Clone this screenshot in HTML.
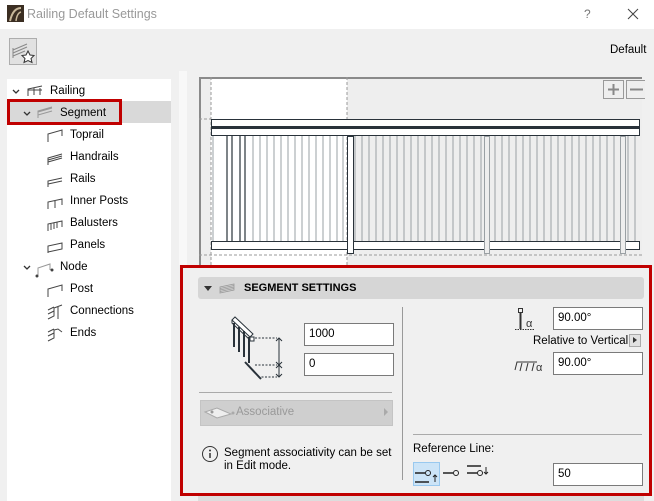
<!DOCTYPE html>
<html><head><meta charset="utf-8"><style>
*{margin:0;padding:0;box-sizing:border-box}
body{width:654px;height:501px;overflow:hidden;background:#f0f0f0;font-family:"Liberation Sans",sans-serif;font-size:11.5px;color:#000;position:relative}
.a{position:absolute}
.inp{position:absolute;background:#fff;border:1px solid #7a7a7a;height:23px;width:90px;padding:4px 0 0 4px;font-size:11.5px}
.ti{position:absolute;left:0;white-space:nowrap}
</style></head><body>
<div class="a" style="left:0;top:0;width:654px;height:29px;background:#fff"></div>
<div class="a" style="left:7px;top:5px;width:17px;height:17px;background:#3b2e22"></div>
<svg class="a" style="left:7px;top:5px" width="17" height="17"><path d="M3 16 Q6 3 14 3" stroke="#c8b89a" stroke-width="2" fill="none"/><path d="M9 16 Q10 8 14 7" stroke="#c8b89a" stroke-width="1.5" fill="none"/></svg>
<div class="a" style="left:27px;top:7px;font-size:12.5px;color:#999">Railing Default Settings</div>
<div class="a" style="left:584px;top:7px;font-size:12px;color:#777">?</div>
<svg class="a" style="left:627px;top:8px" width="12" height="12"><path d="M1 1L11 11M11 1L1 11" stroke="#444" stroke-width="1"/></svg>
<div class="a" style="left:9px;top:38px;width:28px;height:27px;border:1px solid #adadad;background:#e1e1e1"></div>
<svg class="a" style="left:11px;top:40px" width="25" height="24"><path d="M2 10L16 4M2 13L16 7M2 16L14 11M2 8v10" stroke="#888" fill="none"/><path d="M17 11l2 4 4 .5-3 3 1 4-4-2-4 2 1-4-3-3 4-.5z" fill="#fff" stroke="#333"/></svg>
<div class="a" style="left:610px;top:44px">Default</div>
<div class="a" style="left:7px;top:79px;width:164px;height:422px;background:#fff"></div>
<div class="a" style="left:7px;top:101px;width:164px;height:22px;background:#d9d9d9"></div>
<div class="a" style="left:7px;top:99px;width:115px;height:26px;border:3px solid #c00000"></div>
<div class="a" style="left:179px;top:71px;width:8px;height:194px;background:#f8f8f8"></div>
<svg class="a" style="left:0;top:81px" width="171" height="270" fill="none" stroke="#444">
<path d="M13 9l3 3 3-3M24 31l3 3 3-3M24 185l3 3 3-3" stroke="#333" stroke-width="1.3"/>
<path d="M28 15v-7l14-3M34 14v-7M40 14v-7M28 9h14" />
<path d="M38 37v-7l14-4M38 34l14-4M38 31l14-4" stroke="#999"/>
<path d="M48 61v-8l14-4v6" /><path d="M48 84v-7l14-4M48 81l14-4M48 79l14-4" />
<path d="M48 106v-6l14-3M48 103l14-3"/><path d="M48 128v-7l14-3v6M55 127v-7"/>
<path d="M48 150v-7l14-3v6M51 149v-6M54 148v-6M57 147v-6"/><path d="M48 172v-7l14-3v6l-14 3"/>
<path d="M38 194v-7l12-4v6" stroke="#999"/><circle cx="37" cy="195" r="1" fill="#333"/><circle cx="52" cy="189" r="1" fill="#333"/>
<path d="M48 216v-8l14-4v6"/><path d="M48 238l6-3v-8l8-3M48 233l6-3M48 229l6-3M58 238v-12"/><path d="M48 260l6-3v-8l4-1 4 3M48 255l6-3M48 251l6-3"/>
</svg>
<div class="a" style="left:0;top:85px">
<div class="ti" style="left:50px;top:0">Railing</div>
<div class="ti" style="left:60px;top:22px">Segment</div>
<div class="ti" style="left:70px;top:44px">Toprail</div>
<div class="ti" style="left:70px;top:66px">Handrails</div>
<div class="ti" style="left:70px;top:88px">Rails</div>
<div class="ti" style="left:70px;top:110px">Inner Posts</div>
<div class="ti" style="left:70px;top:132px">Balusters</div>
<div class="ti" style="left:70px;top:154px">Panels</div>
<div class="ti" style="left:60px;top:176px">Node</div>
<div class="ti" style="left:70px;top:198px">Post</div>
<div class="ti" style="left:70px;top:220px">Connections</div>
<div class="ti" style="left:70px;top:242px">Ends</div>
</div>
<div class="a" style="left:199px;top:77px;width:443px;height:188px;background:#eeeeee;border-top:2px solid #8a8a8a;border-left:2px solid #8a8a8a"></div>
<div class="a" style="left:211px;top:79px;width:136px;height:186px;background:#fff"></div>
<svg class="a" style="left:199px;top:77px" width="446" height="188" fill="none">
<path d="M12 0v188M148 0v188M0 42h12M0 178h443" stroke="#999" stroke-dasharray="3,2"/>
<g stroke="#9aa0a4" stroke-width="1">
<path d="M54 45v126M61 45v126M68 45v126M75 45v126M82 45v126M89 45v126M96 45v126M103 45v126M110 45v126M117 45v126M124 45v126M131 45v126M138 45v126M144 45v126"/>
<path d="M156 45v126M163 45v126M170 45v126M177 45v126M184 45v126M191 45v126M198 45v126M205 45v126M212 45v126M219 45v126M226 45v126M233 45v126M240 45v126M247 45v126M254 45v126M261 45v126M268 45v126M275 45v126M282 45v126M289 45v126M296 45v126M303 45v126M310 45v126M317 45v126M324 45v126M331 45v126M338 45v126M345 45v126M352 45v126M359 45v126M366 45v126M373 45v126M380 45v126M387 45v126M394 45v126M401 45v126M408 45v126M415 45v126M422 45v126M429 45v126M436 45v126"/>
<path d="M14 45v126"/>
</g>
<path d="M28 45v126M33 45v126M41 45v126M46 45v126" stroke="#29323a" stroke-width="1.2"/>
<rect x="12.5" y="42.5" width="428" height="7" fill="#fff" stroke="#29323a"/>
<rect x="12.5" y="51.5" width="428" height="7" fill="#fff" stroke="#29323a"/>
<path d="M12 50.5h429" stroke="#29323a" stroke-width="2"/>
<rect x="12.5" y="164.5" width="428" height="8" fill="#fff" stroke="#29323a"/>
<rect x="285.5" y="59.5" width="5" height="117" fill="#eee" stroke="#9aa0a4"/>
<rect x="421.5" y="59.5" width="5" height="117" fill="#eee" stroke="#9aa0a4"/>
<rect x="148.5" y="59.5" width="6" height="117" fill="#fff" stroke="#29323a"/>
<rect x="404.5" y="3.5" width="20" height="18" fill="#eee" stroke="#999"/><path d="M409 12.5h11M414.5 7v11" stroke="#888" stroke-width="2"/>
<rect x="427.5" y="3.5" width="20" height="18" fill="#eee" stroke="#999"/><path d="M431 12.5h13" stroke="#888" stroke-width="2"/>
</svg>
<div class="a" style="left:198px;top:496px;width:446px;height:5px;background:#ddd"></div>
<div class="a" style="left:180px;top:265px;width:472px;height:231px;border:3px solid #c00000"></div>
<div class="a" style="left:198px;top:277px;width:446px;height:22px;background:#d6d6d6;border-radius:3px"></div>
<svg class="a" style="left:203px;top:283px" width="40" height="12"><path d="M1 3h8l-4 5z" fill="#333"/><path d="M17 10V4l14-3v6zM17 7l14-3M17 8.5l14-3M17 5.5l14-3" stroke="#999" fill="none" stroke-width=".8"/></svg>
<div class="a" style="left:244px;top:282px;font-weight:bold;font-size:11px">SEGMENT SETTINGS</div>
<div class="a" style="left:402px;top:307px;width:1px;height:173px;background:#999"></div>
<svg class="a" style="left:230px;top:315px" width="60" height="66" fill="none" stroke="#29323a">
<path d="M2 5l3-3 18 17-3 3zM2 5v3l18 17" fill="#fff"/><rect x="20" y="22" width="4" height="4" fill="#fff"/>
<path d="M4 8v24M9 12v25M14 16v26M19 22v26" stroke-width="2"/><path d="M15 47l16 17" stroke-width="2"/>
<path d="M25 23h22M25 50h22M28 62h19" stroke-dasharray="2,1.5"/><path d="M49 23v39M46 26l3-3 3 3M46 47l3 3 3-3M46 53l3-3 3 3M46 59l3 3 3-3"/>
</svg>
<div class="inp" style="left:304px;top:323px">1000</div>
<div class="inp" style="left:304px;top:353px">0</div>
<div class="a" style="left:199px;top:392px;width:193px;height:1px;background:#aaa"></div>
<div class="a" style="left:200px;top:400px;width:193px;height:26px;background:#cfcfcf;border:1px solid #c4c4c4"></div>
<svg class="a" style="left:203px;top:405px" width="35" height="16"><path d="M2 7l12-4 14 6-14 4z" fill="#eee" stroke="#aaa"/><circle cx="9" cy="7" r="1.5" fill="#999"/><circle cx="30" cy="8" r="1.5" fill="#aaa"/></svg>
<div class="a" style="left:236px;top:406px;color:#999">Associative</div>
<div class="a" style="left:384px;top:408px;width:0;height:0;border-left:4px solid #aaa;border-top:4px solid transparent;border-bottom:4px solid transparent"></div>
<svg class="a" style="left:201px;top:445px" width="18" height="18"><circle cx="9" cy="9" r="7.5" fill="none" stroke="#333"/><path d="M9 8v5" stroke="#333" stroke-width="1.5"/><circle cx="9" cy="5.5" r="1" fill="#333"/></svg>
<div class="a" style="left:224px;top:447px;line-height:13px">Segment associativity can be set<br>in Edit mode.</div>
<svg class="a" style="left:513px;top:307px" width="32" height="25" fill="none" stroke="#333"><rect x="5.5" y="1.5" width="4" height="4"/><path d="M7.5 6v16" stroke-width="2"/><path d="M2 22.5h20" stroke-dasharray="1.5,1"/><text x="13" y="20" font-size="11" fill="#333" stroke="none" font-family="Liberation Sans">α</text></svg>
<div class="inp" style="left:553px;top:307px">90.00°</div>
<div class="a" style="left:533px;top:335px">Relative to Vertical</div>
<div class="a" style="left:629px;top:334px;width:12px;height:13px;background:#e1e1e1;border:1px solid #aaa"></div>
<div class="a" style="left:633px;top:337px;width:0;height:0;border-left:4px solid #333;border-top:3.5px solid transparent;border-bottom:3.5px solid transparent"></div>
<svg class="a" style="left:514px;top:358px" width="32" height="16" fill="none" stroke="#333"><path d="M1 12l2-8h20M8 5l-2 8M14 5l-2 8M20 5l-2 8"/><text x="22" y="13" font-size="11" fill="#333" stroke="none" font-family="Liberation Sans">α</text></svg>
<div class="inp" style="left:553px;top:352px">90.00°</div>
<div class="a" style="left:413px;top:434px;width:229px;height:1px;background:#aaa"></div>
<div class="a" style="left:413px;top:443px">Reference Line:</div>
<div class="a" style="left:413px;top:462px;width:27px;height:24px;background:#cce4f7;border:1px solid #99c9ef"></div>
<svg class="a" style="left:413px;top:462px" width="90" height="24" fill="none" stroke="#222" stroke-width="1.5"><path d="M2 11h10M2 20h14"/><circle cx="15" cy="11" r="2.5" stroke-width="1"/><path d="M22 20v-7M20 15l2-2 2 2" stroke-width="1"/>
<path d="M30 11h10"/><circle cx="43" cy="11" r="2.5" stroke-width="1"/>
<path d="M54 4h14M54 11h10"/><circle cx="67" cy="11" r="2.5" stroke-width="1"/><path d="M73 5v7M71 10l2 2 2-2" stroke-width="1"/></svg>
<div class="inp" style="left:553px;top:463px">50</div>
</body></html>
